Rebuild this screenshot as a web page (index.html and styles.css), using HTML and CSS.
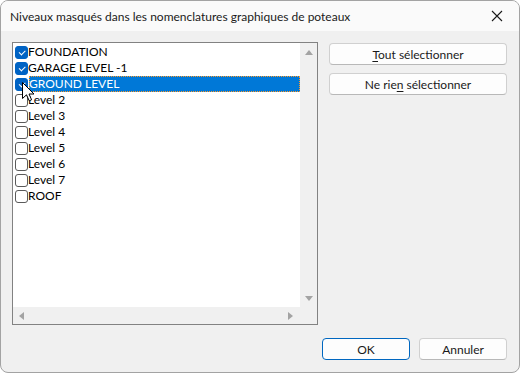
FILE: index.html
```html
<html>
<head>
	<title>Niveaux masqués</title>
	<meta charset="utf-8">
	<link rel="stylesheet" href="styles.css">
</head>
<body>
<div class="dialog">
	<div class="titlebar">
		<span class="title_text">Niveaux masqués dans les nomenclatures graphiques de poteaux</span>
		<svg class="close_icon" width="12" height="12" viewBox="0 0 12 12"><path d="M1 1 L11 11 M11 1 L1 11" stroke="#1a1a1a" stroke-width="1.1"/></svg>
	</div>

	<div class="body">
		<div class="main">
			<div class="listbox">
				<div class="list_area">
					<div class="list_items">
						<div class="item"><span class="check on"></span><span class="label">FOUNDATION</span></div>
						<div class="item"><span class="check on"></span><span class="label">GARAGE LEVEL -1</span></div>
						<div class="item"><span class="check on"></span><span class="label selected">GROUND LEVEL</span></div>
						<div class="item"><span class="check"></span><span class="label">Level 2</span></div>
						<div class="item"><span class="check"></span><span class="label">Level 3</span></div>
						<div class="item"><span class="check"></span><span class="label">Level 4</span></div>
						<div class="item"><span class="check"></span><span class="label">Level 5</span></div>
						<div class="item"><span class="check"></span><span class="label">Level 6</span></div>
						<div class="item"><span class="check"></span><span class="label">Level 7</span></div>
						<div class="item"><span class="check"></span><span class="label">ROOF</span></div>
					</div>
					<div class="vscroll">
						<span class="arrow up"></span>
						<span class="arrow down"></span>
					</div>
				</div>
				<div class="hscroll_row">
					<div class="hscroll">
						<span class="arrow left"></span>
						<span class="arrow right"></span>
					</div>
					<div class="corner"></div>
				</div>
			</div>

			<div class="side_buttons">
				<div class="btn"><span><u>T</u>out sélectionner</span></div>
				<div class="btn"><span>Ne rie<u>n</u> sélectionner</span></div>
			</div>
		</div>

		<div class="footer">
			<div class="btn btn_ok">OK</div>
			<div class="btn btn_cancel">Annuler</div>
		</div>
	</div>

	<!-- mouse pointer over the third checkbox -->
	<svg class="cursor" width="13" height="20" viewBox="0 0 13 20">
		<path d="M0.5 0.5 L0.5 16.5 L4.5 12.8 L7.2 18.8 L9.6 17.8 L7 12 L12 12 Z" fill="#ffffff" stroke="#000000" stroke-width="1"/>
	</svg>
</div>
</body>
</html>
```

FILE: styles.css
```css
html, body {
	margin: 0;
	padding: 0;
	background: #ffffff;
}

.dialog {
	position: relative;
	box-sizing: border-box;
	width: 520px;
	height: 373px;
	border: 1px solid #a3a3a3;
	border-radius: 8px;
	background: #f0f0f0;
	overflow: hidden;
	font-family: Lato, "Noto Sans", sans-serif;
	font-size: 12px;
	color: #000000;
}

.titlebar {
	height: 30px;
	background: #fafafa;
	display: flex;
	align-items: center;
	justify-content: space-between;
	padding: 0 16px 0 9px;
}

.title_text {
	font-size: 12px;
	color: #1a1a1a;
}

.body {
	padding: 11px 11px 0 11px;
}

.main {
	display: flex;
	gap: 11px;
}

/* list with checkboxes */
.listbox {
	box-sizing: border-box;
	width: 306px;
	height: 283px;
	border: 1px solid #828282;
	background: #f0f0f0;
	display: flex;
	flex-direction: column;
}

.list_area {
	flex: 1;
	display: flex;
}

.list_items {
	flex: 1;
	background: #ffffff;
	padding-top: 1px;
}

.item {
	height: 16px;
	display: flex;
	align-items: center;
	padding-left: 2px;
}

.check {
	box-sizing: border-box;
	width: 13px;
	height: 13px;
	border: 1px solid #5a5a5a;
	border-radius: 3px;
	background: #ffffff;
	position: relative;
}

.check.on {
	background: #0063c4;
	border-color: #0063c4;
}

.check.on:after {
	content: "";
	position: absolute;
	left: 3px;
	top: 1px;
	width: 5px;
	height: 2.5px;
	border-left: 1px solid #ffffff;
	border-bottom: 1px solid #ffffff;
	transform: translate(0, 2px) rotate(-45deg);
}

.label {
	line-height: 16px;
	height: 16px;
	padding: 0 1px 0 0;
	white-space: nowrap;
}

.label.selected {
	flex: 1;
	box-sizing: border-box;
	margin-left: 1px;
	background: #0078d7;
	color: #ffffff;
	outline: 1px dotted #ff9a28;
	outline-offset: -1px;
}

.vscroll {
	width: 17px;
	display: flex;
	flex-direction: column;
	justify-content: space-between;
	align-items: center;
	padding: 7px 0 6px 0;
}

.hscroll_row {
	height: 17px;
	display: flex;
}

.hscroll {
	flex: 1;
	display: flex;
	justify-content: space-between;
	align-items: center;
	padding: 0 7px 0 6px;
	background: #f0f0f0;
}

.corner {
	width: 17px;
}

.arrow {
	width: 0;
	height: 0;
	border: 4px solid transparent;
}

.arrow.up {
	border-bottom: 5px solid #a3a3a3;
	border-top-width: 0;
}

.arrow.down {
	border-top: 5px solid #a3a3a3;
	border-bottom-width: 0;
}

.arrow.left {
	border-right: 5px solid #a3a3a3;
	border-left-width: 0;
}

.arrow.right {
	border-left: 5px solid #a3a3a3;
	border-right-width: 0;
}

/* buttons */
.side_buttons {
	display: flex;
	flex-direction: column;
	gap: 8px;
	padding-top: 1px;
}

.btn {
	box-sizing: border-box;
	width: 178px;
	height: 22px;
	border: 1px solid #d0d0d0;
	border-bottom-color: #b8b8b8;
	border-radius: 4px;
	background: #fdfdfd;
	display: flex;
	align-items: center;
	justify-content: center;
	color: #1a1a1a;
}

.btn u {
	text-underline-offset: 2px;
}

.footer {
	display: flex;
	justify-content: flex-end;
	gap: 9px;
	padding-top: 13px;
	padding-right: 1px;
}

.btn_ok, .btn_cancel {
	width: 88px;
}

.btn_ok {
	border: 1px solid #0067c0;
}

.cursor {
	position: absolute;
	left: 21px;
	top: 81px;
}
```
